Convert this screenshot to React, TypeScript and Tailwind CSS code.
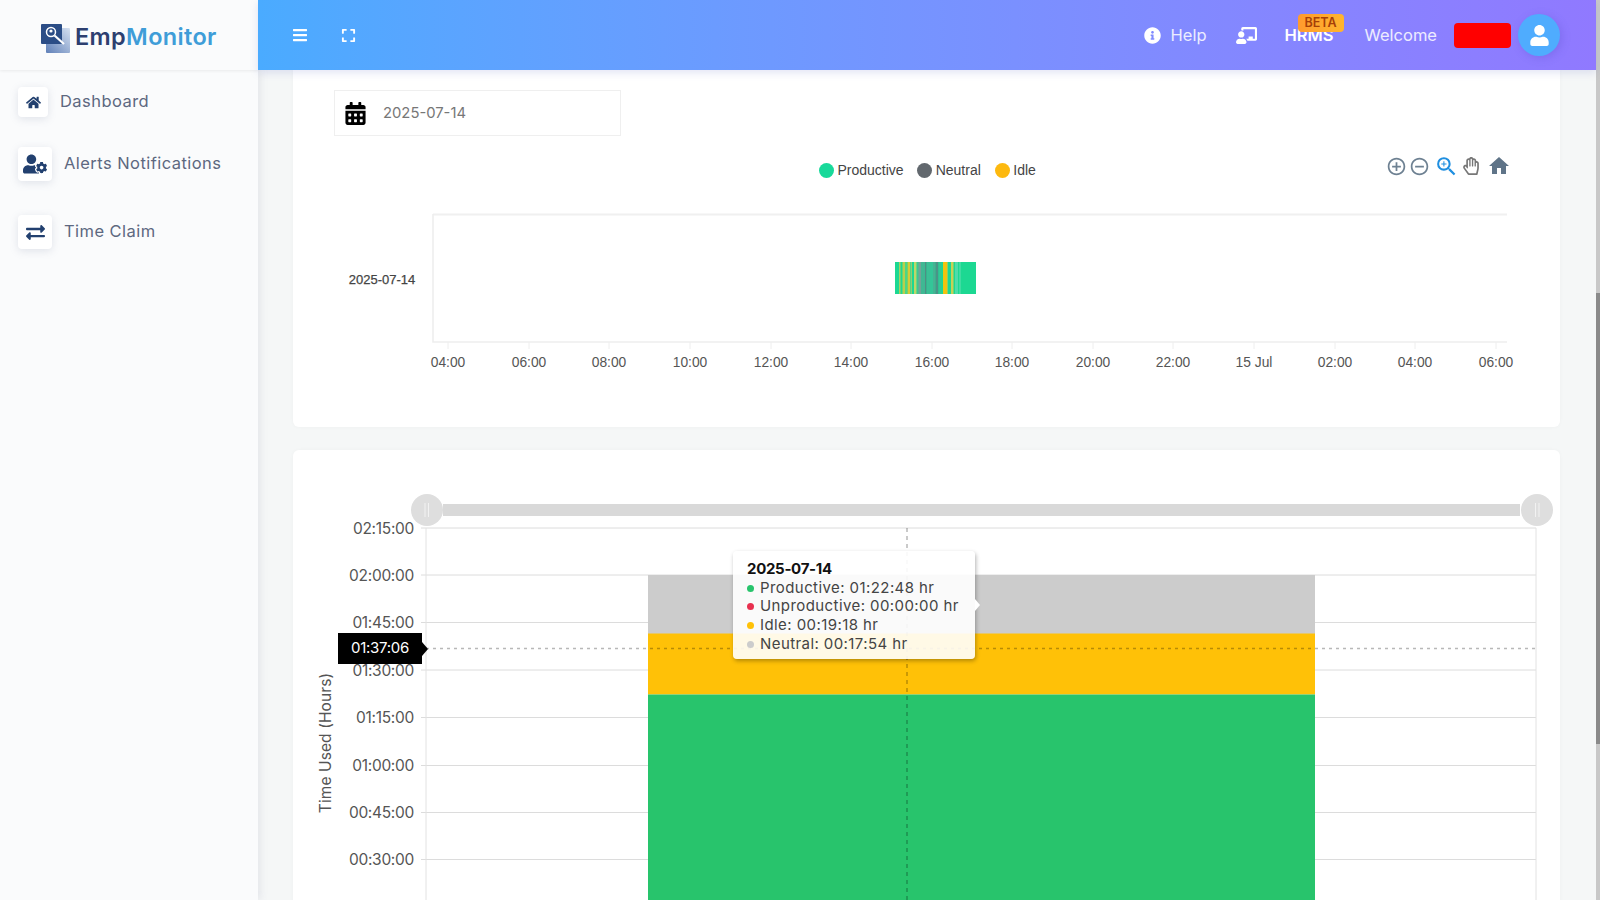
import { FaBars, FaCalendarAlt, FaChalkboardTeacher, FaExchangeAlt, FaExpand, FaHome, FaInfoCircle, FaRegHandPaper, FaUser, FaUserCog } from "react-icons/fa";
import { MdAddCircleOutline, MdHome, MdRemoveCircleOutline, MdZoomIn } from "react-icons/md";

const navItems = [
  { label: "Dashboard", icon: <FaHome className="text-[15px]" />, box: "w-[30px] h-[30px]", row: "mt-[17px] gap-[12px]", text: "-mt-[2px]" },
  { label: "Alerts Notifications", icon: <FaUserCog className="text-[24px]" />, box: "w-[34px] h-[34px]", row: "mt-[30px] gap-[12px]", text: "-mt-[2px]" },
  { label: "Time Claim", icon: <FaExchangeAlt className="text-[19px]" />, box: "w-[34px] h-[34px]", row: "mt-[34px] gap-[12px]", text: "-mt-[1px]" },
];

const xTicks = [
  [448, "04:00"], [529, "06:00"], [609, "08:00"], [690, "10:00"], [771, "12:00"], [851, "14:00"], [932, "16:00"],
  [1012, "18:00"], [1093, "20:00"], [1173, "22:00"], [1254, "15 Jul"], [1335, "02:00"], [1415, "04:00"], [1496, "06:00"],
] as const;

const yTicks = [
  [528, "02:15:00"], [575, "02:00:00"], [622.5, "01:45:00"], [670, "01:30:00"],
  [717.5, "01:15:00"], [765.5, "01:00:00"], [812.5, "00:45:00"], [859.5, "00:30:00"],
] as const;

// activity stripes on the timeline bar: x, width, colour
const stripes = [
  [899, 1.5, "#a8d062"], [902.5, 2.5, "#b9cf4c"], [905.5, 1, "#7fd27c"], [907.5, 2.5, "#d6cb36"], [910.5, 1.5, "#8fd070"],
  [914, 2.5, "#bcd66a"], [917.5, 1, "#5fb48f"], [918.5, 2.5, "#73a397"], [921, 4, "#3fb893"], [925, 1.5, "#4f8f85"],
  [927, 3, "#3bbf96"], [930, 3, "#34c698"], [933, 2.5, "#45b393"], [935.5, 3, "#4a9488"], [938.5, 3, "#2fca96"],
  [943, 4, "#f2c30f"], [947, 1, "#8fce66"], [951, 2.5, "#c6d155"], [955, 3, "#4fdcaa"], [959.5, 1, "#62dfb1"],
] as const;

const tooltipRows = [
  ["Productive: 01:22:48 hr", "bg-[#28c46c]"],
  ["Unproductive: 00:00:00 hr", "bg-[#e8304f]"],
  ["Idle: 00:19:18 hr", "bg-[#ffc107]"],
  ["Neutral: 00:17:54 hr", "bg-[#cccccc]"],
];

function Logo() {
  return (
    <svg width="30" height="30" viewBox="0 0 30 30" className="shrink-0 mt-[3px]">
      <defs>
        <linearGradient id="logoBack" x1="0" y1="1" x2="1" y2="0">
          <stop offset="0" stopColor="#5f80b8" />
          <stop offset="1" stopColor="#d5e0f0" />
        </linearGradient>
      </defs>
      <rect x="5" y="4" width="24" height="25" rx="1" fill="url(#logoBack)" />
      <rect x="0" y="0" width="21" height="20" rx="1" fill="#2b4d86" />
      <circle cx="10" cy="8" r="4.5" fill="none" stroke="#fff" strokeWidth="1.5" />
      <path d="M13.5 11.5 L23 20" stroke="#fff" strokeWidth="2.2" />
      <circle cx="10" cy="7" r="1.6" fill="#fff" />
    </svg>
  );
}

function Sidebar() {
  return (
    <aside className="w-[258px] shrink-0 bg-[#fafbfc] shadow-[2px_0_8px_rgba(90,90,130,0.12)] z-10 flex flex-col">
      <div className="h-[70px] flex items-center pl-[41px] pt-[4px] gap-[4px] shadow-[0_1px_3px_rgba(0,0,0,0.07)]">
        <Logo />
        <span className="text-[23.5px] font-semibold tracking-[0.35px]">
          <span className="text-[#2d3f70]">Emp</span>
          <span className="text-[#3f9dd8]">Monitor</span>
        </span>
      </div>
      <nav className="flex flex-col pl-[18px]">
        {navItems.map((item) => (
          <div key={item.label} className={`flex items-center ${item.row}`}>
            <div className={`flex items-center justify-center rounded bg-white text-[#22406f] shadow-[0_2px_8px_rgba(120,130,160,0.2)] ${item.box}`}>
              {item.icon}
            </div>
            <span className={`text-[16.5px] tracking-[0.45px] text-[#5d6880] ${item.text}`}>{item.label}</span>
          </div>
        ))}
      </nav>
    </aside>
  );
}

function Header() {
  return (
    <header className="h-[70px] shrink-0 z-10 flex items-center pl-[34px] pr-[36px] text-white bg-gradient-to-r from-[#4aabff] to-[#9079ff] shadow-[0_3px_8px_rgba(100,110,200,0.18)]">
      <FaBars className="text-[16px]" />
      <FaExpand className="text-[15px] ml-[33px]" />
      <div className="ml-auto flex items-center">
        <FaInfoCircle className="text-[17px]" />
        <span className="ml-[10px] text-[16.5px] text-white/85">Help</span>
        <FaChalkboardTeacher className="text-[21px] ml-[29px]" />
        <div className="relative ml-[28px]">
          <span className="text-[16.5px] font-semibold">HRMS</span>
          <span className="absolute left-[13px] -top-[9px] w-[46px] h-[18px] rounded bg-gradient-to-r from-[#ff9a2e] to-[#ffb52e] text-[#a63f08] text-[12.5px] leading-[18px] font-semibold text-center">BETA</span>
        </div>
        <span className="ml-[31px] text-[16.5px] text-white/85">Welcome</span>
        <div className="ml-[17px] w-[57px] h-[25px] rounded-sm bg-[#ff0000]" />
        <div className="ml-[7px] w-[42px] h-[42px] rounded-full bg-[#4facfe] flex items-center justify-center shadow-[2px_2px_8px_rgba(90,80,200,0.3)]">
          <FaUser className="text-[21px]" />
        </div>
      </div>
    </header>
  );
}

function TimelineCard() {
  return (
    <section className="bg-white rounded-b-md h-[357px] shrink-0 shadow-[0_0_4px_rgba(0,0,0,0.03)]">
      <div className="ml-[41px] mt-[20px] w-[287px] h-[46px] border border-[#efefef] flex items-center pl-[9px] gap-[16px]">
        <FaCalendarAlt className="text-[23px] text-black" />
        <span className="text-[14.8px] text-[#777777] mt-[1px]">2025-07-14</span>
      </div>

      <div className="mt-[24px] h-[20px] flex items-center pl-[526px] pr-[49px] text-[14px] text-[#444444] font-['Liberation_Sans',sans-serif]">
        <span className="w-[15px] h-[15px] rounded-full bg-[#18d99a]" />
        <span className="ml-[3.5px]">Productive</span>
        <span className="ml-[13.5px] w-[15px] h-[15px] rounded-full bg-[#62686e]" />
        <span className="ml-[3.5px]">Neutral</span>
        <span className="ml-[14px] w-[15px] h-[15px] rounded-full bg-[#fdb90f]" />
        <span className="ml-[3.5px]">Idle</span>
        <div className="ml-auto -mt-[8px] flex items-center text-[#6e8192]">
          <MdAddCircleOutline className="text-[21px]" />
          <MdRemoveCircleOutline className="text-[21px] ml-[2px]" />
          <MdZoomIn className="text-[25px] ml-[4px] text-[#1f8fe0]" />
          <FaRegHandPaper className="text-[18px] ml-[3px] text-[#777777]" />
          <MdHome className="text-[24px] ml-[7px] text-[#5f7488]" />
        </div>
      </div>

      <svg viewBox="293 205 1267 180" className="w-[1267px] h-[180px] mt-[25px] font-['Liberation_Sans',sans-serif]">
        <path d="M433 214.5 H1507" stroke="#f0f0f0" strokeWidth="2" />
        <path d="M433 214 V342 H1507" fill="none" stroke="#eeeeee" strokeWidth="1.6" />
        {xTicks.map(([x, label], i) => (
          <g key={i}>
            <path d={`M${x} 342 V349`} stroke="#eeeeee" />
            <text x={x} y="367" textAnchor="middle" fontSize="13.8" fill="#555555">{label}</text>
          </g>
        ))}
        <text x="382" y="284" textAnchor="middle" fontSize="13" stroke="#444444" strokeWidth="0.25" fill="#444444">2025-07-14</text>
        <rect x="895" y="262" width="81" height="32" fill="#1cd892" />
        {stripes.map(([x, w, c]) => (
          <rect key={x} x={x} y="262" width={w} height="32" fill={c} />
        ))}
      </svg>
    </section>
  );
}

function UsageCard() {
  return (
    <section className="relative bg-white rounded-t-md mt-[23px] h-[460px] shrink-0 shadow-[0_0_4px_rgba(0,0,0,0.03)]">
      <svg viewBox="293 450 1267 460" className="w-[1267px] h-[460px]">
        <rect x="443" y="504" width="1077" height="12" fill="#d9d9d9" />
        <circle cx="427" cy="510" r="16" fill="#dedede" />
        <circle cx="1537" cy="510" r="16" fill="#dedede" />
        <path d="M425 503 V517 M428.5 503 V517 M1535.5 503 V517 M1539 503 V517" stroke="#f2f2f2" />

        {yTicks.map(([y, label]) => (
          <g key={label}>
            <path d={`M421 ${y} H1536`} stroke="#dcdcdc" />
            <text x="414" y={y + 5.5} textAnchor="end" fontSize="15.5" letterSpacing="-0.3" fill="#555555">{label}</text>
          </g>
        ))}
        <path d="M426 528 V900 M1536 528 V900" stroke="#e2e2e2" />
        <text transform="translate(331 743) rotate(-90)" textAnchor="middle" fontSize="15.5" letterSpacing="0.1" fill="#555555">Time Used (Hours)</text>

        <rect x="648" y="575" width="667" height="59" fill="#cccccc" />
        <rect x="648" y="633.5" width="667" height="61" fill="#ffc107" />
        <rect x="648" y="694.5" width="667" height="210" fill="#28c46c" />

        <path d="M426 648.5 H1536" stroke="#000000" strokeOpacity="0.28" strokeWidth="1.4" strokeDasharray="3 4" />
        <path d="M907 528 V900" stroke="#000000" strokeOpacity="0.35" strokeWidth="1.2" strokeDasharray="4 4" />
      </svg>

      {/* crosshair value on the y axis */}
      <div className="absolute left-[45px] top-[183px] w-[84px] h-[31px] bg-black text-white text-[15px] tracking-[-0.3px] flex items-center justify-center">
        01:37:06
        <span className="absolute -right-[6px] top-[9px] border-y-[7px] border-y-transparent border-l-[6px] border-l-black" />
      </div>

      <div className="absolute left-[440px] top-[101px] w-[242px] h-[108px] rounded bg-white/90 shadow-[1px_2px_4px_rgba(0,0,0,0.3)] pl-[14px] pt-[8.5px] text-[15px] leading-[18.7px] tracking-[0.42px] text-[#444444]">
        <div className="font-bold text-[#111111] mb-[0.5px] tracking-[-0.3px]">2025-07-14</div>
        {tooltipRows.map(([text, dot]) => (
          <div key={text} className="flex items-center">
            <span className={`w-[7px] h-[7px] rounded-full ${dot}`} />
            <span className="ml-[6px]">{text}</span>
          </div>
        ))}
        <span className="absolute -right-[5px] top-[48px] border-y-[6px] border-y-transparent border-l-[5px] border-l-white" />
      </div>
    </section>
  );
}

export default function App() {
  return (
    <div className="h-screen w-full flex overflow-hidden bg-[#f5f7f7] font-['Inter',sans-serif]">
      <Sidebar />
      <div className="flex-1 min-w-0 flex flex-col">
        <Header />
        <main className="flex-1 min-h-0 overflow-hidden pl-[35px] pr-[36px] flex flex-col">
          <TimelineCard />
          <UsageCard />
        </main>
      </div>
      {/* page scrollbar */}
      <div className="w-[4px] shrink-0 bg-[#c8c8c8] flex flex-col">
        <div className="h-[293px] shrink-0" />
        <div className="h-[451px] shrink-0 bg-[#8a8a8a]" />
      </div>
    </div>
  );
}
